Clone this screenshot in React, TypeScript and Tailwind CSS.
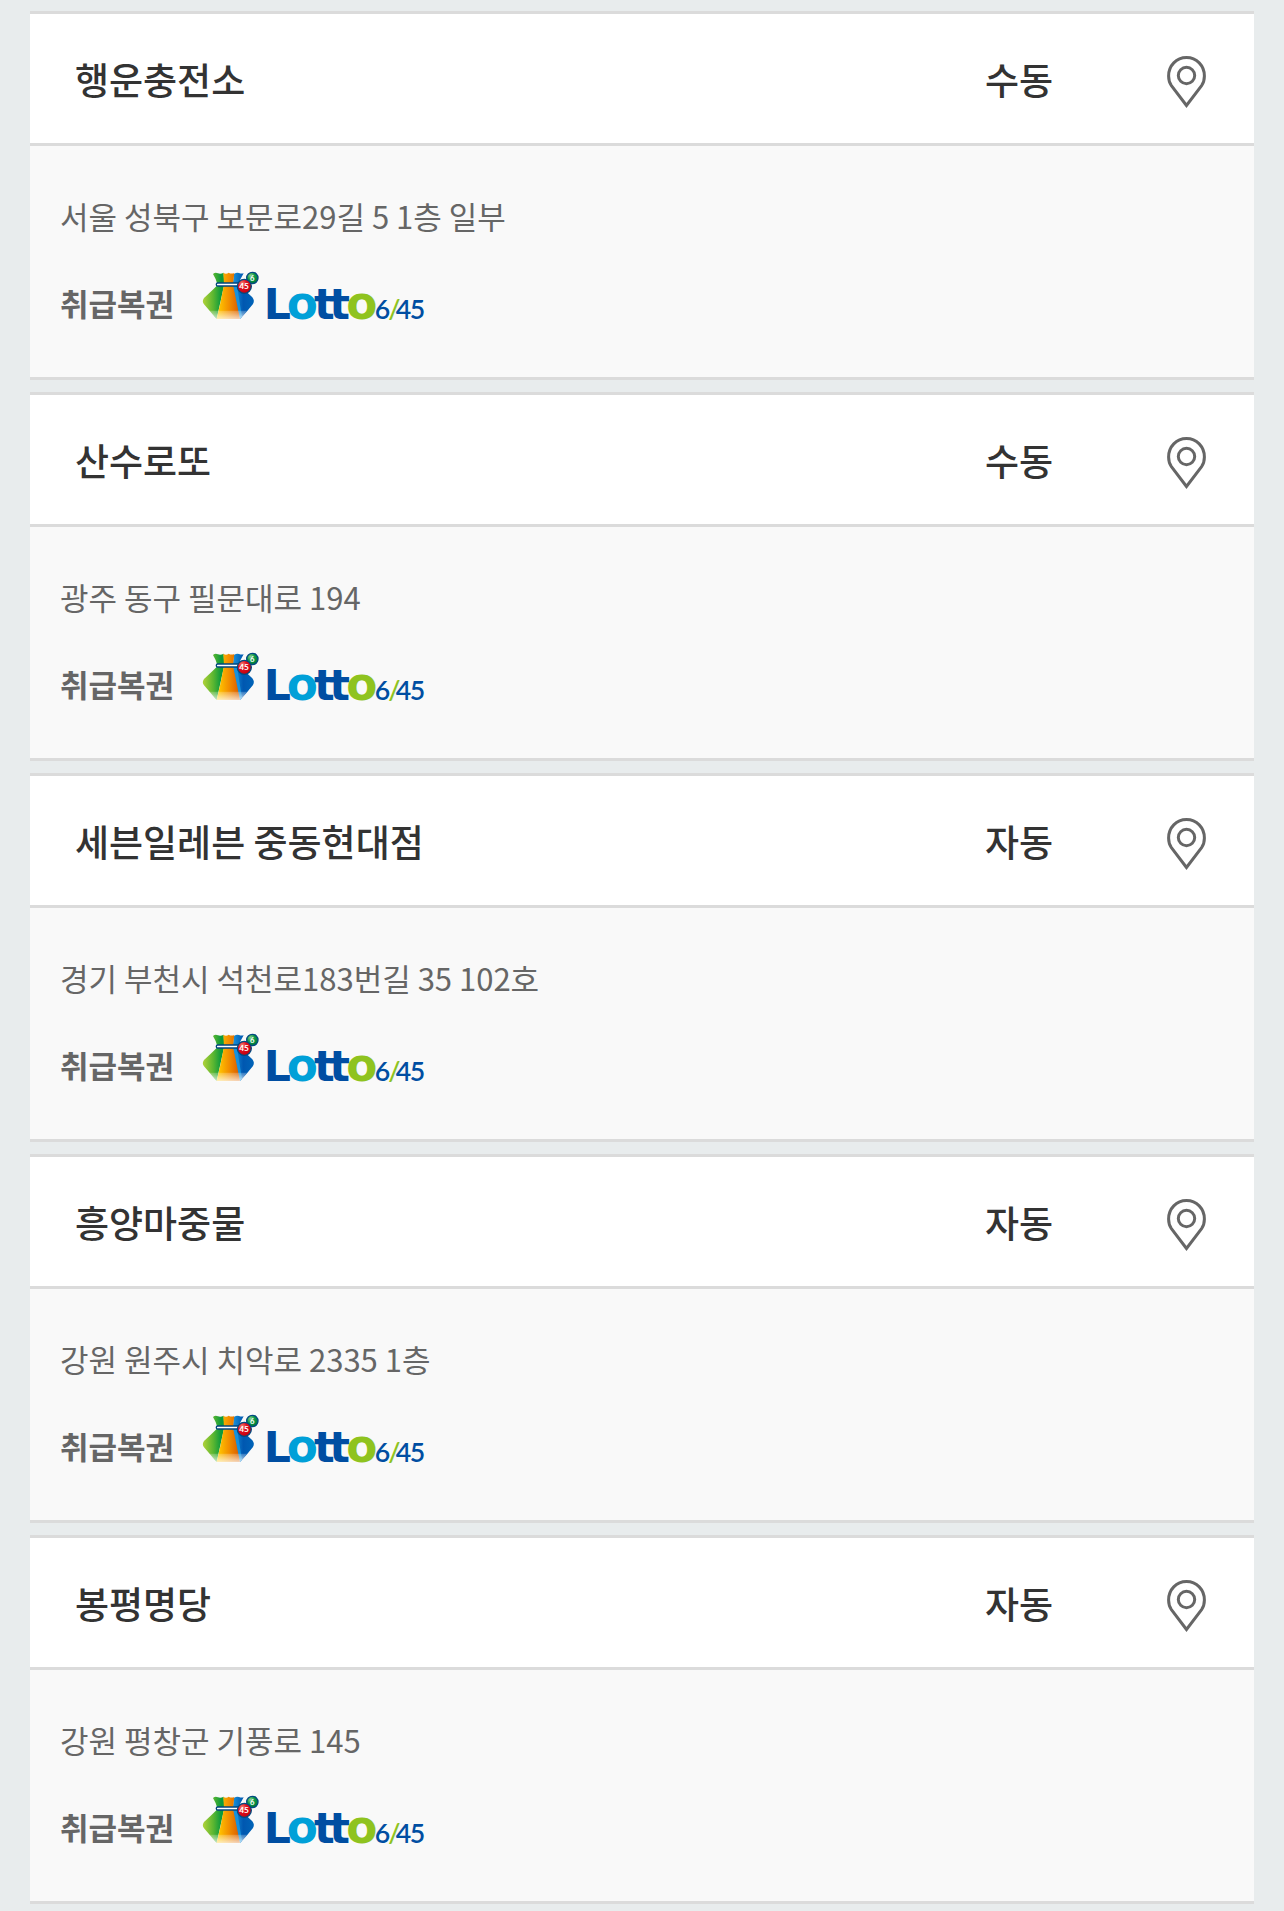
interface Store {
    name: string;
    method: string;
    address: string;
}

const stores: Store[] = [
    { name: '행운충전소', method: '수동', address: '서울 성북구 보문로29길 5 1층 일부' },
    { name: '산수로또', method: '수동', address: '광주 동구 필문대로 194' },
    { name: '세븐일레븐 중동현대점', method: '자동', address: '경기 부천시 석천로183번길 35 102호' },
    { name: '흥양마중물', method: '자동', address: '강원 원주시 치악로 2335 1층' },
    { name: '봉평명당', method: '자동', address: '강원 평창군 기풍로 145' },
];

function PinIcon() {
    return (
        <svg className="mt-1.5" width="39" height="52" viewBox="0 0 39 52" fill="none" stroke="#666" strokeWidth="3" aria-hidden="true">
            <path d="M19.5 49.5 L4.4 29.6 C2.4 26.8 1.6 23.4 1.6 20 C1.6 9.6 9.4 1.6 19.5 1.6 C29.6 1.6 37.4 9.6 37.4 20 C37.4 23.4 36.6 26.8 34.6 29.6 Z" />
            <circle cx="19.5" cy="19.5" r="8.2" />
        </svg>
    );
}

function LottoLogo() {
    return (
        <svg className="h-[52px] w-[224px] overflow-visible" viewBox="36 30 672 156" role="img" aria-label="Lotto 6/45">
            <defs>
                <linearGradient id="bagGreen" x1="0" x2="1">
                    <stop offset="0.05" stopColor="#a9cf38" />
                    <stop offset="0.5" stopColor="#58b531" />
                    <stop offset="0.85" stopColor="#0c9a3c" />
                </linearGradient>
                <linearGradient id="bagOrange" x1="0" x2="1">
                    <stop offset="0.1" stopColor="#ffc400" />
                    <stop offset="0.5" stopColor="#f39200" />
                    <stop offset="0.9" stopColor="#dc6400" />
                </linearGradient>
                <linearGradient id="bagBlue" x1="0" x2="1">
                    <stop offset="0" stopColor="#1a94dc" />
                    <stop offset="0.5" stopColor="#0057b0" />
                    <stop offset="1" stopColor="#0064b8" />
                </linearGradient>
                <linearGradient id="bagShine" x1="0" x2="0" y1="0" y2="1">
                    <stop offset="0" stopColor="#fff" stopOpacity="0.2" />
                    <stop offset="1" stopColor="#fff" stopOpacity="0.75" />
                </linearGradient>
                <radialGradient id="ballRed" cx="0.35" cy="0.3" r="0.7">
                    <stop offset="0" stopColor="#f58b78" />
                    <stop offset="0.45" stopColor="#e01020" />
                    <stop offset="1" stopColor="#c4000f" />
                </radialGradient>
                <radialGradient id="ballGreen" cx="0.35" cy="0.3" r="0.7">
                    <stop offset="0" stopColor="#8fd08a" />
                    <stop offset="0.5" stopColor="#0d9a48" />
                    <stop offset="1" stopColor="#007a38" />
                </radialGradient>
            </defs>

            {/* bag */}
            <path fill="url(#bagGreen)" d="M69 42 Q76 36 84 40 Q92 43 101 38 L103 73 L80 177 Q60 154 42 133 Q35 124 42 114 Q66 92 83 75 Q78 56 69 42Z" />
            <path fill="url(#bagBlue)" d="M132 42 Q140 36 147 39 Q154 42 161 40 Q150 56 147 74 L187 112 Q195 122 189 132 Q170 156 150 177 L128 74Z" />
            <path fill="url(#bagOrange)" d="M100 38 Q108 44 116 38 Q124 43 133 39 L129 73 Q144 126 150 177 H80 Q93 124 102 74Z" />
            <path fill="#1792dc" d="M130 78 L150 177 L156 170 L141 78Z" />
            <path fill="url(#bagShine)" d="M58 152 H171 L150 178 H80Z" />
            <rect x="79" y="69" width="72" height="9" rx="4" fill="#fff" stroke="#00467f" strokeWidth="4" />

            {/* balls */}
            <circle cx="187" cy="54" r="17" fill="url(#ballGreen)" stroke="#004a80" strokeWidth="4" />
            <text x="187" y="62" textAnchor="middle" fontFamily="Lato" fontSize="23" fontWeight="700" fill="#fff">6</text>
            <circle cx="163" cy="79" r="21" fill="url(#ballRed)" stroke="#004a80" strokeWidth="4" />
            <text x="162" y="88" textAnchor="middle" fontFamily="Lato" fontSize="25" fontWeight="700" fill="#fff">45</text>

            {/* word mark */}
            <g fontFamily="DejaVu Sans" fontWeight="700">
                <text x="221" y="177" fontSize="128" fill="#004ea2">L</text>
                <text x="372" y="177" fontSize="130" fill="#004ea2">t</text>
                <text x="418" y="177" fontSize="130" fill="#004ea2">t</text>
                <text x="290" y="176" fontSize="136" fill="#00a0d8">o</text>
                <text x="469" y="176" fontSize="136" fill="#8fc31f">o</text>
            </g>
            <g fontFamily="Lato" fontWeight="600" fontSize="80">
                <text x="554" y="177" fill="#004ea2">6</text>
                <text x="595" y="177" fill="#8fc31f">/</text>
                <text x="617" y="177" fill="#004ea2">4</text>
                <text x="659" y="177" fill="#004ea2">5</text>
            </g>
        </svg>
    );
}

function StoreCard({ store }: { store: Store }) {
    return (
        <li className="border-y-[3px] border-[#dbdbdb]">
            <div className="flex h-[132px] items-center border-b-[3px] border-[#dbdbdb] bg-white text-[37px] leading-[54px] font-medium text-[#333]">
                <h2 className="flex-1 pl-[45px]">{store.name}</h2>
                <span className="w-[198px] text-center">{store.method}</span>
                <a href="#map" className="flex w-[136px] justify-center" aria-label={`${store.name} 지도`}>
                    <PinIcon />
                </a>
            </div>
            <div className="bg-[#f9f9f9] px-[30px] pt-[46px] pb-[55px] text-[31px] leading-[48px] text-[#666]">
                <p>{store.address}</p>
                <div className="mt-[30px] flex items-end gap-7">
                    <strong className="leading-[38px] font-bold">취급복권</strong>
                    <LottoLogo />
                </div>
            </div>
        </li>
    );
}

export default function App() {
    return (
        <main className="min-h-screen bg-[#e8eced] px-[30px] pt-[11px] pb-[7px] font-['Noto_Sans_CJK_KR',sans-serif]">
            <ul className="flex flex-col gap-3">
                {stores.map((store) => (
                    <StoreCard key={store.name} store={store} />
                ))}
            </ul>
        </main>
    );
}
